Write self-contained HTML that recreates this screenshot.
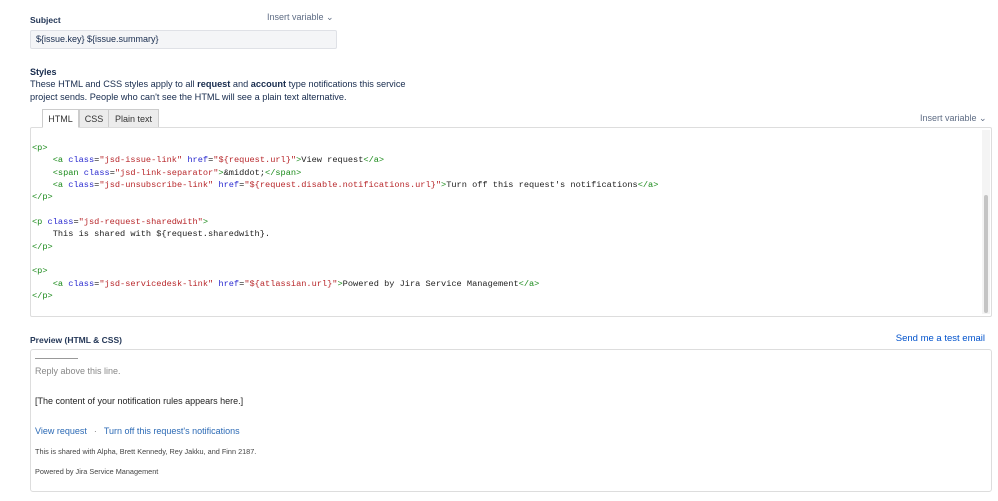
<!DOCTYPE html>
<html><head><style>
body{margin:0;width:998px;height:501px;background:#fff;font-family:"Liberation Sans",sans-serif;color:#172b4d;position:relative;overflow:hidden}
.a{position:absolute;white-space:nowrap}
.lbl{font-size:8.5px;font-weight:bold;color:#253858}
pre.a{margin:0;font-family:"Liberation Mono",monospace;font-size:8.65px;line-height:12.35px;color:#222;white-space:pre}
.t{color:#1a8a1a}.at{color:#2a2ad0}.s{color:#b8282c}
.tab{position:absolute;top:109px;height:19px;font-size:9px;line-height:19px;text-align:center;border:1px solid #ccc;box-sizing:border-box;background:#ececec;color:#333}
.lnk{color:#2c6ab5}
</style></head><body>
<div class="a lbl" style="left:30px;top:15px">Subject</div>
<div class="a" style="left:267px;top:12px;font-size:9px;color:#5e6c84">Insert variable ⌄</div>
<div class="a" style="left:30px;top:30px;width:307px;height:19px;background:#f4f5f7;border:1px solid #dfe1e6;box-sizing:border-box;border-radius:2px;font-size:9px;line-height:17px;padding-left:5px">${issue.key} ${issue.summary}</div>
<div class="a" style="left:30px;top:67px;font-size:9px;font-weight:bold">Styles</div>
<div class="a" style="left:30px;top:78px;font-size:9.2px;line-height:12.5px">These HTML and CSS styles apply to all <b>request</b> and <b>account</b> type notifications this service<br>project sends. People who can't see the HTML will see a plain text alternative.</div>
<div class="tab" style="left:42px;width:37px;background:#fff;border-bottom-color:#fff;z-index:2">HTML</div>
<div class="tab" style="left:79px;width:30px">CSS</div>
<div class="tab" style="left:108px;width:51px">Plain text</div>
<div class="a" style="left:920px;top:113px;font-size:9px;color:#5e6c84">Insert variable ⌄</div>
<div class="a" style="left:30px;top:127px;width:962px;height:190px;border:1px solid #ddd;box-sizing:border-box;border-radius:2px"></div>
<div class="a" style="left:982px;top:130px;width:8px;height:184px;background:#f4f4f4"></div>
<div class="a" style="left:984px;top:195px;width:4px;height:118px;background:#c4c4c4;border-radius:2px"></div>
<pre class="a" style="left:32px;top:142px"><span class="t">&lt;p&gt;</span>
    <span class="t">&lt;a</span> <span class="at">class</span>=<span class="s">"jsd-issue-link"</span> <span class="at">href</span>=<span class="s">"${request.url}"</span><span class="t">&gt;</span>View request<span class="t">&lt;/a&gt;</span>
    <span class="t">&lt;span</span> <span class="at">class</span>=<span class="s">"jsd-link-separator"</span><span class="t">&gt;</span>&amp;middot;<span class="t">&lt;/span&gt;</span>
    <span class="t">&lt;a</span> <span class="at">class</span>=<span class="s">"jsd-unsubscribe-link"</span> <span class="at">href</span>=<span class="s">"${request.disable.notifications.url}"</span><span class="t">&gt;</span>Turn off this request's notifications<span class="t">&lt;/a&gt;</span>
<span class="t">&lt;/p&gt;</span>

<span class="t">&lt;p</span> <span class="at">class</span>=<span class="s">"jsd-request-sharedwith"</span><span class="t">&gt;</span>
    This is shared with ${request.sharedwith}.
<span class="t">&lt;/p&gt;</span>

<span class="t">&lt;p&gt;</span>
    <span class="t">&lt;a</span> <span class="at">class</span>=<span class="s">"jsd-servicedesk-link"</span> <span class="at">href</span>=<span class="s">"${atlassian.url}"</span><span class="t">&gt;</span>Powered by Jira Service Management<span class="t">&lt;/a&gt;</span>
<span class="t">&lt;/p&gt;</span></pre>
<div class="a lbl" style="left:30px;top:335px">Preview (HTML &amp; CSS)</div>
<div class="a lnk" style="right:13px;top:333px;font-size:9.5px;color:#0052cc">Send me a test email</div>
<div class="a" style="left:30px;top:349px;width:962px;height:143px;border:1px solid #ddd;box-sizing:border-box;border-radius:3px"></div>
<div class="a" style="left:35px;top:358px;width:43px;border-top:1px solid #999"></div>
<div class="a" style="left:35px;top:366px;font-size:9px;color:#888">Reply above this line.</div>
<div class="a" style="left:35px;top:396px;font-size:9px;color:#222">[The content of your notification rules appears here.]</div>
<div class="a" style="left:35px;top:426px;font-size:9px"><span class="lnk">View request</span><span style="color:#888;margin:0 7px">·</span><span class="lnk">Turn off this request's notifications</span></div>
<div class="a" style="left:35px;top:447px;font-size:7.3px;color:#444">This is shared with Alpha, Brett Kennedy, Rey Jakku, and Finn 2187.</div>
<div class="a" style="left:35px;top:467px;font-size:7.3px;color:#444">Powered by Jira Service Management</div>
</body></html>
